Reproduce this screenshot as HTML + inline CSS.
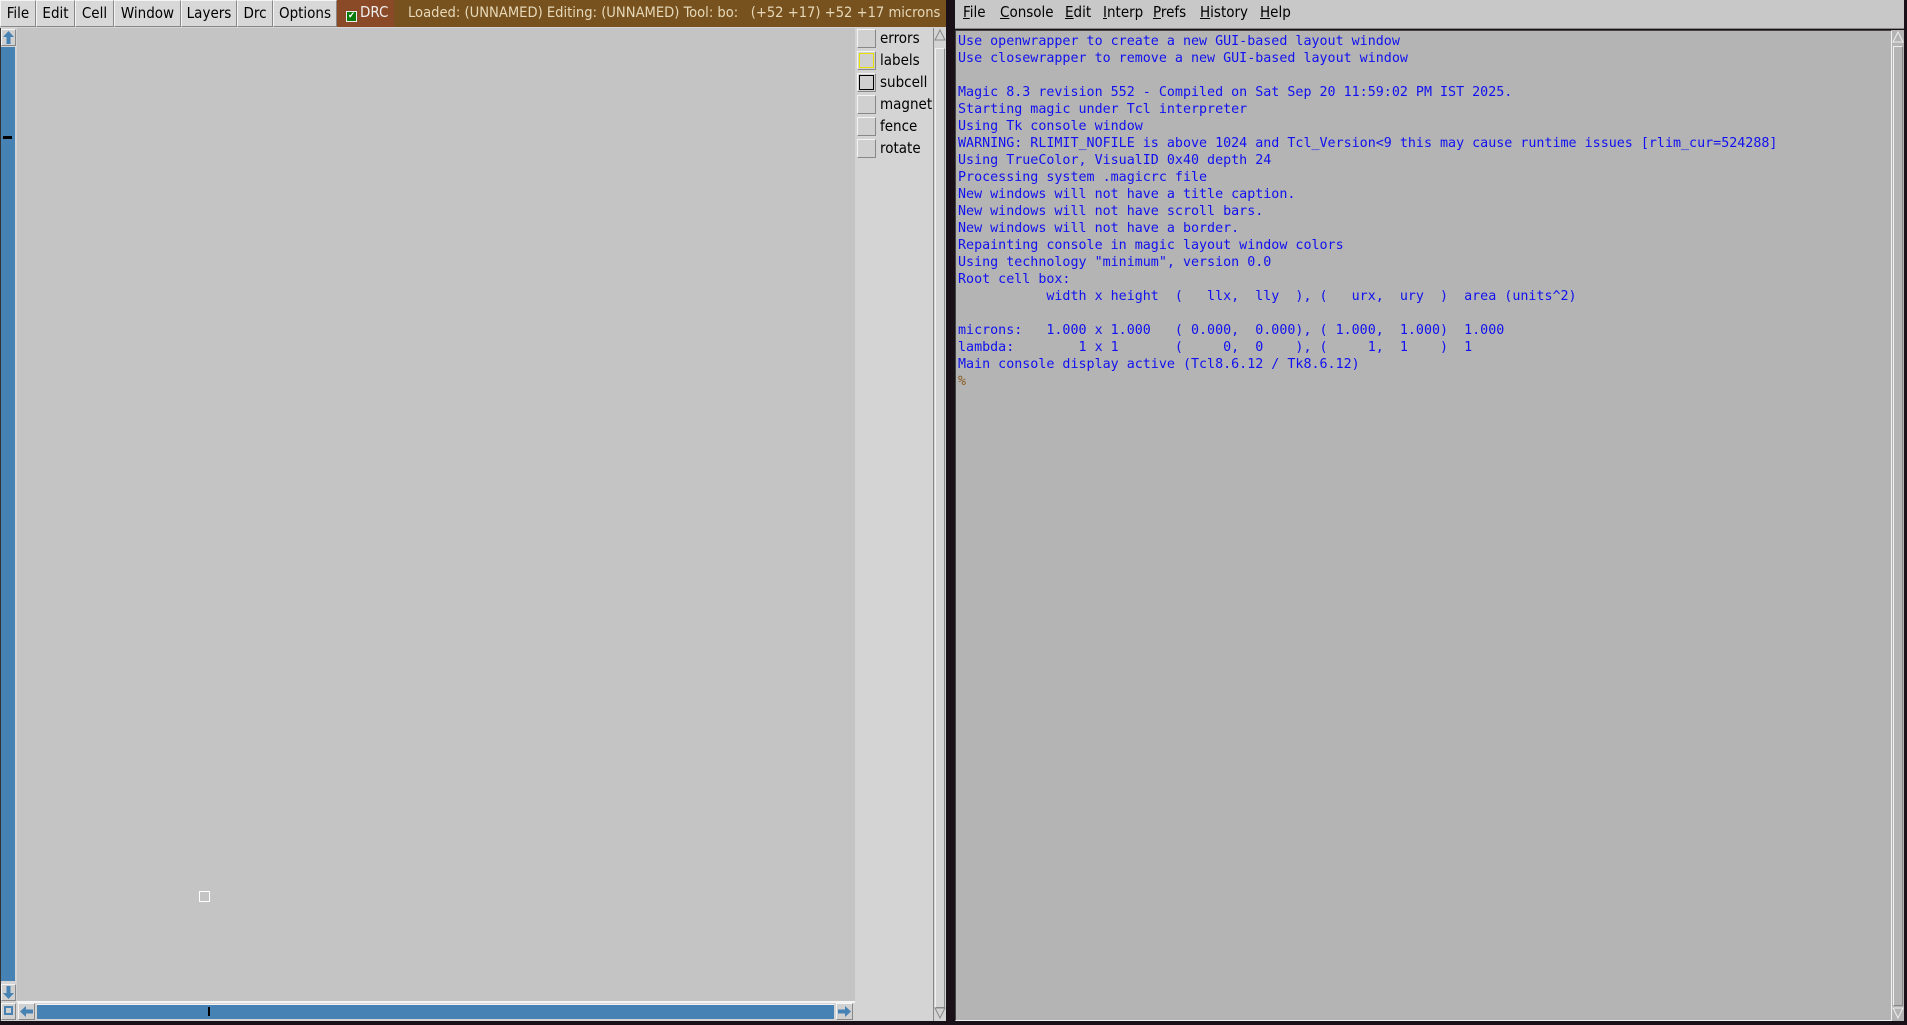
<!DOCTYPE html>
<html><head><meta charset="utf-8"><style>
*{margin:0;padding:0;box-sizing:border-box}
body{width:1907px;height:1025px;background:#1a1018;position:relative;overflow:hidden;font-family:"DejaVu Sans Condensed","Liberation Sans",sans-serif}
.a{position:absolute}
.mb{position:absolute;top:0;height:27px;background:#d8d8d8;border:1px solid #f4f4f4;border-right-color:#888;border-bottom-color:#888;font-size:15px;color:#000;line-height:25px;text-align:center}
.tg{position:absolute;left:857px;width:19px;height:19px;background:#d0d0d0;border:1px solid #f4f4f4;border-right-color:#888;border-bottom-color:#888}
.tl{position:absolute;left:880px;font-size:15px;color:#000;line-height:19px}
.con{position:absolute;left:958px;top:33px;font-family:"DejaVu Sans Mono","Liberation Mono",monospace;font-size:13.35px;line-height:17px;color:#1010f0;white-space:pre}
.rm{position:absolute;top:3px;font-size:15px;color:#000}
.rm u{text-decoration:underline}
.btn{position:absolute;background:#d0d0d0;border:1px solid #f4f4f4;border-right-color:#888;border-bottom-color:#888}
</style></head><body>
<div class="a" style="left:0;top:0;width:946px;height:1021px;background:#d4d4d4"></div>
<div class="mb" style="left:0;width:36px">File</div>
<div class="mb" style="left:36px;width:39px">Edit</div>
<div class="mb" style="left:75px;width:39px">Cell</div>
<div class="mb" style="left:114px;width:67px">Window</div>
<div class="mb" style="left:181px;width:56px">Layers</div>
<div class="mb" style="left:237px;width:36px">Drc</div>
<div class="mb" style="left:273px;width:64px">Options</div>
<div class="a" style="left:337px;top:0;width:57px;height:27px;background:#8a4a28;color:#eee;font-size:15px;line-height:25px;padding-left:9px;white-space:nowrap"><span style="display:inline-block;width:11px;height:11px;background:#0a7a0a;border:1px solid #eee;vertical-align:-1px;margin-right:3px;color:#fff;font-size:9px;line-height:9px;text-align:center">✔</span>DRC</div>
<div class="a" style="left:394px;top:0;width:552px;height:27px;background:#77521f;color:#e6d8b8;font-size:14.6px;line-height:25px;padding-left:14px;white-space:pre;overflow:hidden">Loaded: (UNNAMED) Editing: (UNNAMED) Tool: bo:   (+52 +17) +52 +17 microns</div>
<div class="a" style="left:17px;top:28px;width:838px;height:974px;background:#c4c4c4"></div>
<div class="a" style="left:0;top:28px;width:1px;height:993px;background:#333"></div>
<div class="btn" style="left:1px;top:29px;width:15px;height:17px"></div>
<svg class="a" style="left:2px;top:30px" width="13" height="15"><path d="M6.5 1L12 7H8.5V14H4.5V7H1Z" fill="#4682b4"/></svg>
<div class="a" style="left:1px;top:47px;width:14px;height:934px;background:#4682b4"></div>
<div class="a" style="left:3px;top:136px;width:9px;height:3px;background:#000"></div>
<div class="btn" style="left:1px;top:984px;width:15px;height:17px"></div>
<svg class="a" style="left:2px;top:985px" width="13" height="15"><path d="M6.5 14L12 8H8.5V1H4.5V8H1Z" fill="#4682b4"/></svg>
<div class="a" style="left:17px;top:1001px;width:838px;height:2px;background:#f4f4f4"></div>
<div class="btn" style="left:1px;top:1003px;width:15px;height:17px"></div>
<div class="a" style="left:4px;top:1006px;width:9px;height:9px;border:2px solid #4682b4"></div>
<div class="btn" style="left:18px;top:1003px;width:17px;height:17px"></div>
<svg class="a" style="left:19px;top:1005px" width="15" height="13"><path d="M1 6.5L7 1V4.5H14V8.5H7V12Z" fill="#4682b4"/></svg>
<div class="a" style="left:37px;top:1004px;width:797px;height:15px;background:#4682b4;border-top:1px solid #f4f4f4"></div>
<div class="a" style="left:208px;top:1007px;width:2px;height:9px;background:#000"></div>
<div class="btn" style="left:836px;top:1003px;width:17px;height:17px"></div>
<svg class="a" style="left:837px;top:1005px" width="15" height="13"><path d="M14 6.5L8 1V4.5H1V8.5H8V12Z" fill="#4682b4"/></svg>
<div class="a" style="left:199px;top:891px;width:11px;height:11px;border:1px solid #fff"></div>
<div class="tg" style="top:29px"></div><div class="tl" style="top:29px">errors</div>
<div class="tg" style="top:51px"></div><div class="a" style="left:859px;top:53px;width:15px;height:15px;border:1px solid #e8e000"></div><div class="tl" style="top:51px">labels</div>
<div class="tg" style="top:73px"></div><div class="a" style="left:859px;top:75px;width:15px;height:15px;border:1px solid #000"></div><div class="tl" style="top:73px">subcell</div>
<div class="tg" style="top:95px"></div><div class="tl" style="top:95px">magnet</div>
<div class="tg" style="top:117px"></div><div class="tl" style="top:117px">fence</div>
<div class="tg" style="top:139px"></div><div class="tl" style="top:139px">rotate</div>
<div class="a" style="left:933px;top:28px;width:13px;height:993px;background:#d4d4d4;border-left:1px solid #888"></div>
<div class="a" style="left:935px;top:48px;width:10px;height:960px;border:1px solid #f0f0f0;border-right-color:#888;border-bottom-color:#888"></div>
<svg class="a" style="left:934px;top:28px" width="12" height="14"><path d="M6 2L11 12H1Z" fill="#d4d4d4" stroke="#888"/></svg>
<svg class="a" style="left:934px;top:1006px" width="12" height="14"><path d="M6 12L11 2H1Z" fill="#d4d4d4" stroke="#888"/></svg>
<div class="a" style="left:955px;top:0;width:949px;height:29px;background:#c8c8c8;border-bottom:1px solid #888"></div>
<div class="rm" style="left:963px"><u>F</u>ile</div>
<div class="rm" style="left:1000px"><u>C</u>onsole</div>
<div class="rm" style="left:1065px"><u>E</u>dit</div>
<div class="rm" style="left:1103px"><u>I</u>nterp</div>
<div class="rm" style="left:1153px"><u>P</u>refs</div>
<div class="rm" style="left:1200px"><u>H</u>istory</div>
<div class="rm" style="left:1260px"><u>H</u>elp</div>
<div class="a" style="left:955px;top:30px;width:937px;height:991px;background:#b4b4b4;border:1px solid #444;border-right-color:#f0f0f0;border-bottom-color:#f0f0f0"></div>
<div class="a" style="left:1892px;top:30px;width:12px;height:991px;background:#b4b4b4"></div>
<div class="a" style="left:1893px;top:46px;width:10px;height:960px;border:1px solid #f0f0f0;border-right-color:#888;border-bottom-color:#888"></div>
<svg class="a" style="left:1892px;top:30px" width="12" height="14"><path d="M6 2L11 12H1Z" fill="#b4b4b4" stroke="#eee"/></svg>
<svg class="a" style="left:1892px;top:1006px" width="12" height="14"><path d="M6 12L11 2H1Z" fill="#b4b4b4" stroke="#eee"/></svg>
<div class="con">Use openwrapper to create a new GUI-based layout window
Use closewrapper to remove a new GUI-based layout window

Magic 8.3 revision 552 - Compiled on Sat Sep 20 11:59:02 PM IST 2025.
Starting magic under Tcl interpreter
Using Tk console window
WARNING: RLIMIT_NOFILE is above 1024 and Tcl_Version&lt;9 this may cause runtime issues [rlim_cur=524288]
Using TrueColor, VisualID 0x40 depth 24
Processing system .magicrc file
New windows will not have a title caption.
New windows will not have scroll bars.
New windows will not have a border.
Repainting console in magic layout window colors
Using technology "minimum", version 0.0
Root cell box:
           width x height  (   llx,  lly  ), (   urx,  ury  )  area (units^2)

microns:   1.000 x 1.000   ( 0.000,  0.000), ( 1.000,  1.000)  1.000
lambda:        1 x 1       (     0,  0    ), (     1,  1    )  1
Main console display active (Tcl8.6.12 / Tk8.6.12)
<span style="color:#8a5a20">%</span></div>
</body></html>
